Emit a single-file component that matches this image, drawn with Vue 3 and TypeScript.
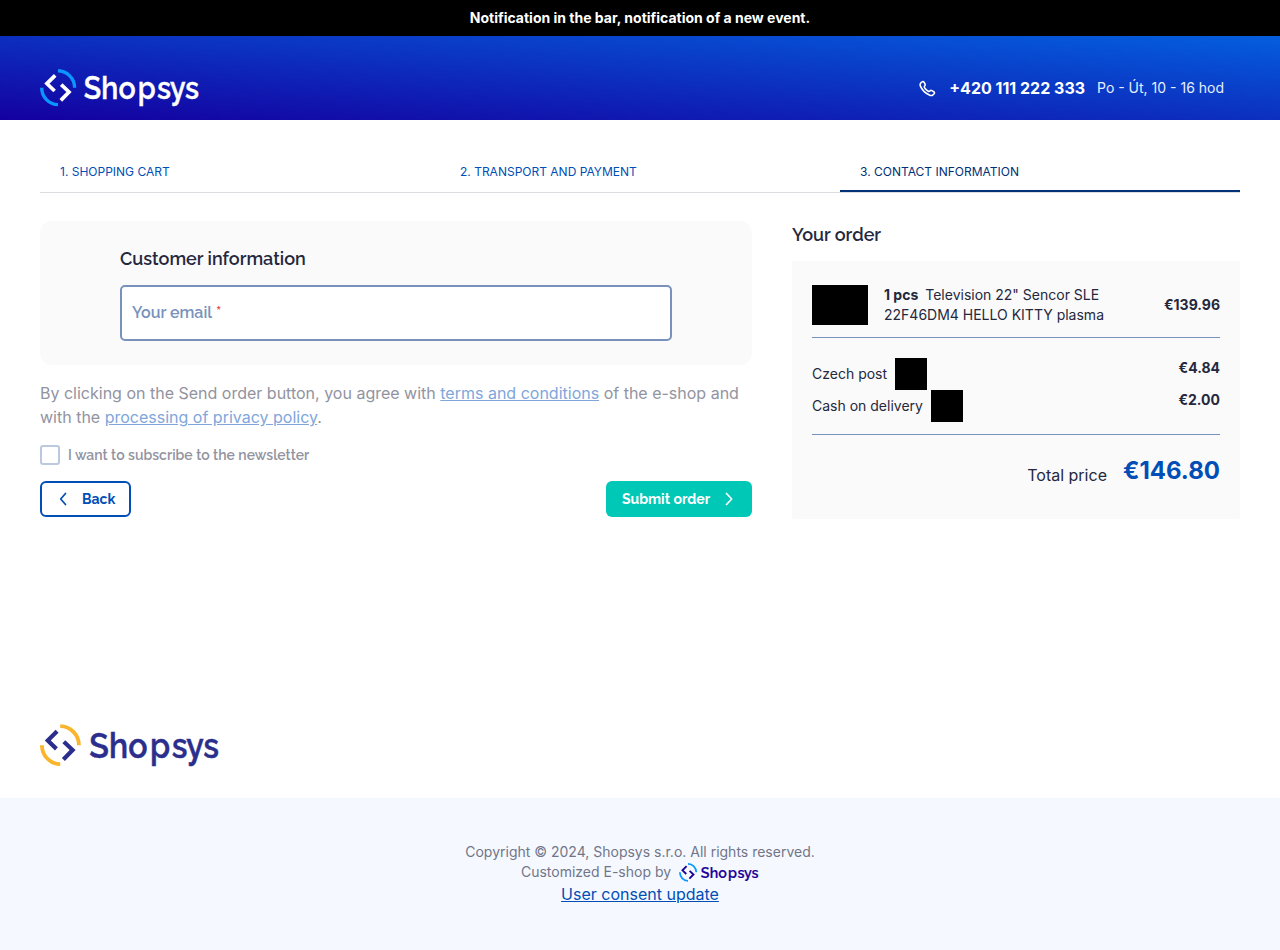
<script setup lang="ts">
import { defineComponent, h } from 'vue'

interface Step {
  label: string
  active: boolean
}

interface Service {
  name: string
  price: string
}

const steps: Step[] = [
  { label: '1. Shopping cart', active: false },
  { label: '2. Transport and payment', active: false },
  { label: '3. Contact information', active: true },
]

const services: Service[] = [
  { name: 'Czech post', price: '€4.84' },
  { name: 'Cash on delivery', price: '€2.00' },
]

const ShopLogo = defineComponent({
  props: {
    accent: { type: String, required: true },
    ink: { type: String, required: true },
  },
  setup(props) {
    return () =>
      h('svg', { viewBox: '0 0 160 38', role: 'img', 'aria-label': 'Shopsys' }, [
        h('path', {
          d: 'M18 1.8A16.9 16.9 0 0 1 34.6 18.7M1.7 18.7A16.5 16.9 0 0 0 18 35.6',
          fill: 'none',
          stroke: props.accent,
          'stroke-width': 3.4,
        }),
        h('path', {
          d: 'M15.2 6.4L6.9 14.6L14.6 22M21.2 15.6L29 23L20.8 31.4',
          fill: 'none',
          stroke: props.ink,
          'stroke-width': 3.7,
        }),
        h(
          'text',
          {
            x: '47.5 66.7 85.3 106.4 127.3 141.3 157.7',
            y: 29.7,
            transform: 'scale(0.92 1)',
            'font-family': 'Raleway, Lato, sans-serif',
            'font-size': 31,
            'font-weight': 600,
            fill: props.ink,
            stroke: props.ink,
            'stroke-width': 0.4,
          },
          'Shopsys',
        ),
      ])
  },
})
</script>

<template>
  <div class="page">
    <div class="notice">Notification in the bar, notification of a new event.</div>
    <header class="header">
      <div class="container header-row">
        <ShopLogo class="logo-header" accent="#0a96ff" ink="#ffffff" />
        <div class="contact">
          <svg class="phone-icon" viewBox="-1 -1 18 18" fill="none" stroke="currentColor" stroke-width="1.6" stroke-linejoin="round">
            <path d="M1.6 3.2L2.9 2C3.6 1.4 4.5 1.5 5 2.2L6 3.9C6.4 4.6 6.3 5.2 5.8 5.7C5.2 6.3 5.1 6.9 5.5 7.7C6.4 9.4 7.5 10.4 9.2 11.2C10 11.6 10.5 11.4 11 10.9C11.5 10.3 12.2 10.2 12.9 10.6L14.8 11.7C15.6 12.2 15.7 13 15.1 13.7L14 14.8C13.2 15.5 12 15.7 10.8 15.2C6.5 13.5 3.1 10.2 1.3 5.9C.9 4.8 1 3.9 1.6 3.2Z" />
          </svg>
          <a class="phone">+420 111 222 333</a>
          <span class="hours">Po - Út, 10 - 16 hod</span>
        </div>
      </div>
    </header>

    <main class="container">
      <ul class="steps">
        <li v-for="step in steps" :key="step.label" class="step" :class="{ active: step.active }">{{ step.label }}</li>
      </ul>
      <div class="columns">
        <form class="form" @submit.prevent>
          <section class="card">
            <h2 class="title">Customer information</h2>
            <label class="email"><span class="email-label">Your email</span><span class="star">*</span></label>
          </section>
          <p class="terms">By clicking on the Send order button, you agree with <a>terms and conditions</a> of the e-shop and with the <a>processing of privacy policy</a>.</p>
          <label class="newsletter"><span class="box"></span><span class="newsletter-text">I want to subscribe to the newsletter</span></label>
          <div class="actions">
            <button class="btn back" type="button">
              <svg class="arrow" viewBox="0 0 16 16"><path d="M10.5 2.5L5.7 8l4.8 5.5" /></svg>
              <span class="back-text">Back</span>
            </button>
            <button class="btn submit" type="submit">
              <span class="submit-text">Submit order</span>
              <svg class="arrow" viewBox="0 0 16 16"><path d="M5.5 2.5L10.7 8l-5.2 5.5" /></svg>
            </button>
          </div>
        </form>

        <aside class="order">
          <h2 class="title order-title">Your order</h2>
          <div class="summary">
            <div class="product">
              <span class="thumb"></span>
              <p class="product-name"><b>1 pcs</b>Television 22" Sencor SLE 22F46DM4 HELLO KITTY plasma</p>
              <strong class="price">€139.96</strong>
            </div>
            <div class="services">
              <div v-for="service in services" :key="service.name" class="service">
                <span>{{ service.name }}</span>
                <span class="service-image"></span>
                <strong class="price">{{ service.price }}</strong>
              </div>
            </div>
            <div class="total">
              <span>Total price</span>
              <strong class="total-price">€146.80</strong>
            </div>
          </div>
        </aside>
      </div>
    </main>

    <div class="container brand">
      <ShopLogo class="logo-brand" accent="#fbb52c" ink="#2b2e8c" />
    </div>
    <footer class="footer">
      <div>Copyright © 2024, Shopsys s.r.o. All rights reserved.</div>
      <div class="made-by">Customized E-shop by<ShopLogo class="logo-small" accent="#0a96ff" ink="#1b0099" /></div>
      <a class="consent">User consent update</a>
    </footer>
  </div>
</template>

<style>
body {
  margin: 0;
  background: #fff;
}
</style>

<style scoped>
.page {
  display: flex;
  flex-direction: column;
  height: 950px;
  font-family: Inter, sans-serif;
  color: #25283d;
  font-size: 14px;
  line-height: 20px;
}
.page * {
  box-sizing: border-box;
}
.container {
  width: 1200px;
  margin: 0 auto;
}
.notice {
  height: 36px;
  line-height: 36px;
  background: #000;
  color: #fff;
  text-align: center;
  font-weight: 700;
}
.header {
  height: 84px;
  background: linear-gradient(to top right, #1400a0 0%, #045ede 100%);
}
.header-row {
  display: flex;
  align-items: center;
  justify-content: space-between;
  padding-top: 33px;
}
.logo-header {
  width: 160px;
  height: 38px;
  overflow: visible;
}
.contact {
  display: flex;
  align-items: center;
  margin-right: 16px;
  color: #fff;
}
.phone-icon {
  width: 18px;
  height: 18px;
  margin-right: 13px;
}
.phone {
  font-size: 16px;
  font-weight: 700;
  margin-right: 12px;
}
.hours {
  color: #e6efff;
}
.steps {
  display: flex;
  height: 41px;
  margin: 32px 0 28px;
  padding: 0;
  list-style: none;
  border-bottom: 1px solid #dcdce0;
}
.step {
  width: 400px;
  height: 40px;
  padding: 0 20px;
  line-height: 39px;
  font-size: 12px;
  text-transform: uppercase;
  color: #004eb6;
}
.step.active {
  border-bottom: 2px solid #003075;
  color: #003075;
}
.columns {
  display: flex;
  gap: 40px;
}
.form {
  width: 712px;
}
.card {
  height: 144px;
  padding: 24px 80px;
  border-radius: 12px;
  background: #fafafa;
}
.title {
  margin: 0;
  font-family: Raleway, Lato, sans-serif;
  font-size: 18px;
  font-weight: 600;
  line-height: 28px;
}
.email {
  display: flex;
  height: 56px;
  margin-top: 12px;
  padding: 14px 10px 0;
  border: 2px solid #7892bc;
  border-radius: 5px;
  background: #fff;
  font-family: Raleway, Lato, sans-serif;
  font-size: 16px;
  font-weight: 600;
  line-height: 24px;
  color: #7892bc;
}
.star {
  margin-left: 4px;
  color: #ec5353;
}
.terms {
  margin: 16px 0;
  font-size: 16px;
  line-height: 24px;
  color: #9293a0;
}
.terms a {
  color: #80a6db;
  text-decoration: underline;
}
.newsletter {
  display: flex;
  align-items: center;
  gap: 8px;
  height: 20px;
  font-family: Raleway, Lato, sans-serif;
  font-weight: 600;
  color: #9293a0;
}
.box {
  width: 20px;
  height: 20px;
  border: 2px solid #bbc8dd;
  border-radius: 3px;
}
.actions {
  display: flex;
  justify-content: space-between;
  margin-top: 16px;
}
.btn {
  display: flex;
  align-items: center;
  height: 36px;
  border-radius: 6px;
  font-family: Raleway, Lato, sans-serif;
  font-size: 14px;
  font-weight: 700;
  line-height: 20px;
}
.back {
  width: 91px;
  gap: 11px;
  padding: 0 0 0 13px;
  border: 2px solid #004eb6;
  background: #fff;
  color: #004eb6;
}
.submit {
  justify-content: space-between;
  width: 146px;
  padding: 0 15px 0 16px;
  border: 0;
  background: #00c8b7;
  color: #fff;
}
.arrow {
  width: 16px;
  height: 16px;
  fill: none;
  stroke: currentColor;
  stroke-width: 1.7;
  stroke-linecap: round;
  stroke-linejoin: round;
}
.order {
  width: 448px;
}
.order-title {
  height: 40px;
}
.summary {
  height: 258px;
  padding: 24px 20px 0;
  border-radius: 2px;
  background: #fafafa;
}
.product {
  display: flex;
  align-items: center;
  height: 53px;
  padding-bottom: 12px;
  border-bottom: 1px solid #7892bc;
}
.thumb {
  width: 56px;
  height: 40px;
  margin-right: 16px;
  background: #000;
}
.product-name {
  width: 240px;
  margin: 0;
}
.product-name b {
  margin-right: 7px;
}
.price {
  margin-left: auto;
}
.services {
  padding: 20px 0 12px;
  border-bottom: 1px solid #7892bc;
}
.service {
  display: flex;
  align-items: center;
  height: 32px;
}
.service .price {
  align-self: flex-start;
}
.service-image {
  width: 32px;
  height: 32px;
  margin-left: 8px;
  background: #000;
}
.total {
  display: flex;
  justify-content: flex-end;
  align-items: flex-start;
  gap: 16px;
  margin-top: 20px;
  font-size: 16px;
  line-height: 40px;
}
.total-price {
  color: #004eb6;
  font-size: 24px;
  line-height: 32px;
}
.brand {
  margin-top: 205px;
  height: 74px;
}
.logo-brand {
  display: block;
  width: 180px;
  height: 43px;
  overflow: visible;
}
.footer {
  display: flex;
  flex: 1;
  flex-direction: column;
  align-items: center;
  padding-top: 44px;
  background: #f5f9ff;
  color: #727588;
}
.made-by {
  display: flex;
  align-items: center;
  gap: 8px;
}
.logo-small {
  width: 80px;
  height: 19px;
  overflow: visible;
}
.consent {
  color: #004eb6;
  font-size: 16px;
  line-height: 24px;
  text-decoration: underline;
}
</style>
